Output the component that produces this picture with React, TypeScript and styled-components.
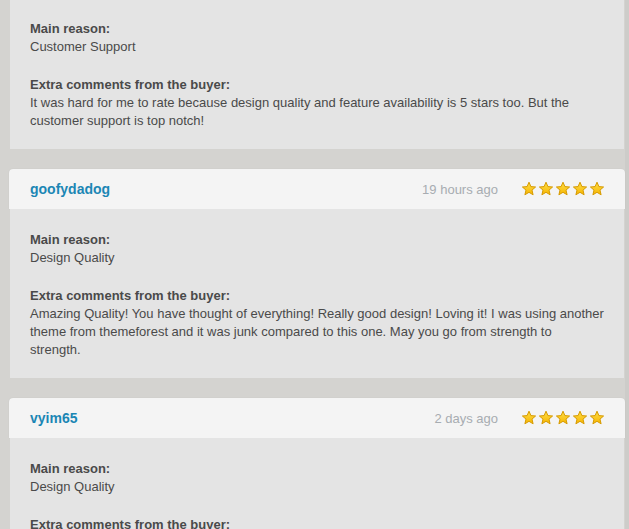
import React from "react";
import styled, { createGlobalStyle } from "styled-components";

const Global = createGlobalStyle`
  html, body { margin: 0; padding: 0; background: #d4d3d0; }
  body { font-family: Arial, "Liberation Sans", sans-serif; }
`;

const Page = styled.div`
  display: flex;
  flex-direction: column;
  gap: 20px;
  padding: 0 1px 0 10px;
  width: 629px;
  box-sizing: border-box;
  min-height: 529px;
  border-right: 4px solid #cdccc9;
`;

const Card = styled.section`
  display: flex;
  flex-direction: column;
`;

const Header = styled.header`
  height: 40px;
  margin: 0 -1px;
  box-sizing: border-box;
  padding: 0 20px 0 20px;
  background: #f4f4f4;
  border-radius: 4px 4px 0 0;
  box-shadow: 0 0 1px rgba(0, 0, 0, 0.12);
  display: flex;
  align-items: center;
`;

const User = styled.a`
  font-size: 14px;
  font-weight: bold;
  color: #1b86b4;
  text-decoration: none;
  flex: 1;
  padding-left: 1px;
`;

const Time = styled.span`
  font-size: 13px;
  color: #a7acb1;
  margin-right: 23px;
`;

const Stars = styled.div`
  display: flex;
  gap: 1px;
`;

const Body = styled.div<{ $top?: number }>`
  background: #e4e4e4;
  padding: ${(p) => p.$top ?? 22}px 20px 19px 20px;
  font-size: 13px;
  line-height: 18px;
  color: #4a4a4a;
  display: flex;
  flex-direction: column;
  gap: 20px;
`;

const Block = styled.div``;

const Label = styled.div`
  font-weight: bold;
  color: #4a4a4a;
`;

const Text = styled.div`
  color: #4a4a4a;
`;

const Star = () => (
  <svg width="16" height="16" viewBox="0 0 16 16">
    <defs>
      <linearGradient id="sg" x1="0" y1="0" x2="0" y2="1">
        <stop offset="0" stopColor="#ffe04a" />
        <stop offset="1" stopColor="#f6b400" />
      </linearGradient>
    </defs>
    <path
      d="M8 1.2 L9.9 5.6 L14.6 6 L11 9.1 L12.1 13.8 L8 11.3 L3.9 13.8 L5 9.1 L1.4 6 L6.1 5.6 Z"
      fill="url(#sg)"
      stroke="#d69a00"
      strokeWidth="1"
      strokeLinejoin="round"
    />
  </svg>
);

type Review = {
  user?: string;
  time?: string;
  reason: string;
  comment?: string;
  top?: number;
};

const reviews: Review[] = [
  {
    reason: "Customer Support",
    comment:
      "It was hard for me to rate because design quality and feature availability is 5 stars too. But the customer support is top notch!",
    top: 20,
  },
  {
    user: "goofydadog",
    time: "19 hours ago",
    reason: "Design Quality",
    comment:
      "Amazing Quality! You have thought of everything! Really good design! Loving it! I was using another theme from themeforest and it was junk compared to this one. May you go from strength to strength.",
  },
  {
    user: "vyim65",
    time: "2 days ago",
    reason: "Design Quality",
    comment: "",
  },
];

export default function App() {
  return (
    <>
      <Global />
      <Page>
        {reviews.map((r, i) => (
          <Card key={i}>
            {r.user && (
              <Header>
                <User href="#">{r.user}</User>
                <Time>{r.time}</Time>
                <Stars>
                  {[0, 1, 2, 3, 4].map((s) => (
                    <Star key={s} />
                  ))}
                </Stars>
              </Header>
            )}
            <Body $top={r.top}>
              <Block>
                <Label>Main reason:</Label>
                <Text>{r.reason}</Text>
              </Block>
              <Block>
                <Label>Extra comments from the buyer:</Label>
                {r.comment ? <Text>{r.comment}</Text> : null}
              </Block>
            </Body>
          </Card>
        ))}
      </Page>
    </>
  );
}
